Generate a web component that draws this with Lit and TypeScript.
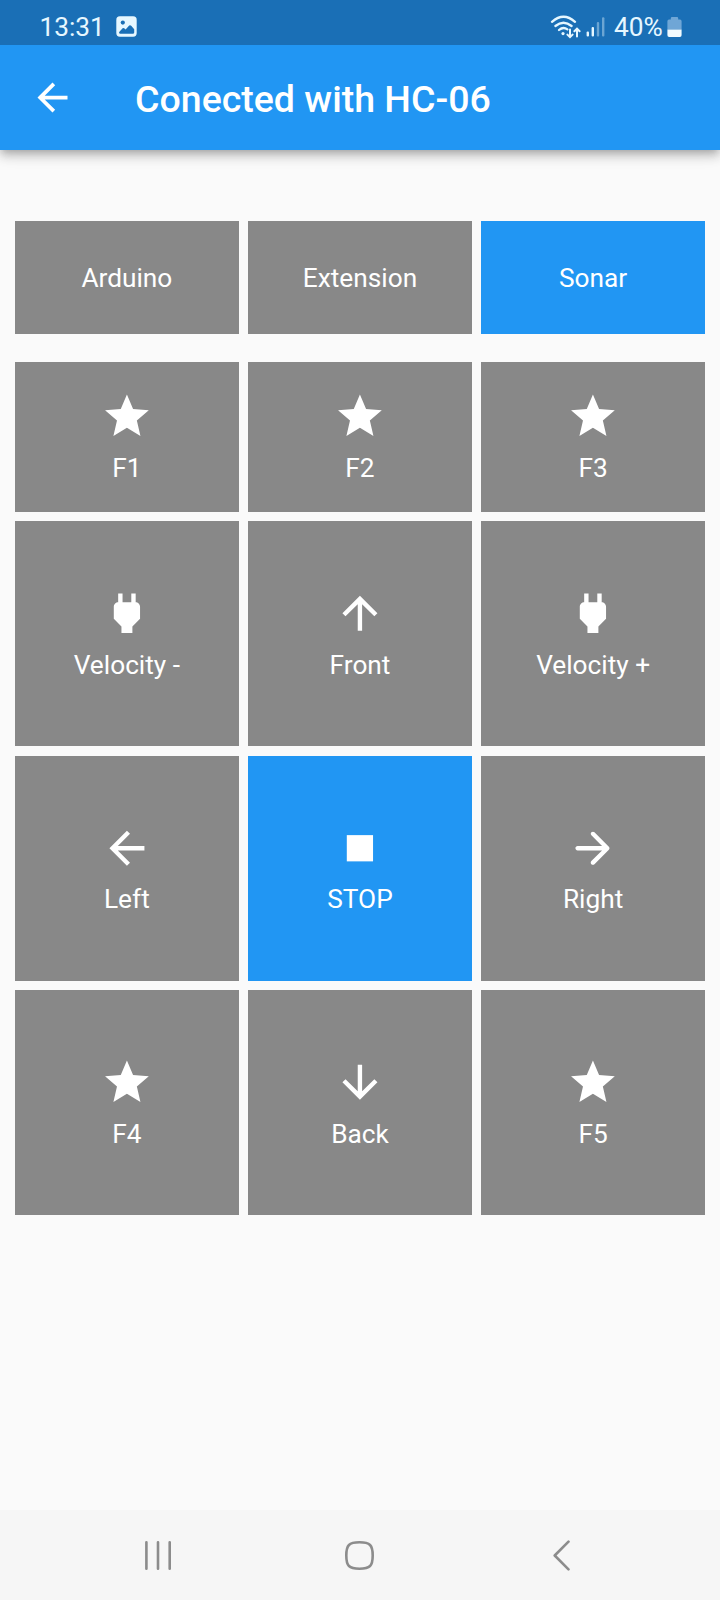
import { LitElement, html, css, svg } from "lit";
import { customElement, property } from "lit/decorators.js";
import { classMap } from "lit/directives/class-map.js";

const ICONS: Record<string, string> = {
  star: "M12 17.27L18.18 21l-1.64-7.03L22 9.24l-7.19-.61L12 2 9.19 8.63 2 9.24l5.46 4.73L5.82 21z",
  power:
    "M16.01 7L16 3h-2v4h-4V3H8v4h-.01C7 6.99 6 7.99 6 8.99v5.49L9.5 18v3h5v-3l3.5-3.51v-5.5c0-1-1-2-1.99-1.99z",
  up: "M4 12l1.41 1.41L11 7.83V20h2V7.83l5.58 5.59L20 12l-8-8-8 8z",
  down: "M20 12l-1.41-1.41L13 16.17V4h-2v12.17l-5.58-5.59L4 12l8 8 8-8z",
  left: "M20 11H7.83l5.59-5.59L12 4l-8 8 8 8 1.41-1.41L7.83 13H20v-2z",
  right:
    "M5 13h11.17l-4.88 4.88c-.39.39-.39 1.03 0 1.42.39.39 1.02.39 1.41 0l6.59-6.59c.39-.39.39-1.02 0-1.41l-6.58-6.6c-.39-.39-1.02-.39-1.41 0-.39.39-.39 1.02 0 1.41L16.17 11H5c-.55 0-1 .45-1 1s.45 1 1 1z",
  stop: "M6 6h12v12H6z",
};

@customElement("pad-button")
class PadButton extends LitElement {
  @property() label = "";
  @property() icon = "";
  @property({ type: Boolean }) active = false;

  static styles = css`
    :host {
      display: block;
    }
    .tile {
      box-sizing: border-box;
      width: 100%;
      height: 100%;
      margin: 0;
      padding: 0;
      border: 0;
      display: flex;
      flex-direction: column;
      align-items: center;
      justify-content: center;
      gap: 9.4px;
      background: #888888;
      color: #fff;
      font: 400 26.25px/30.8px Roboto, sans-serif;
    }
    .active {
      background: #2196f3;
    }
    .icon {
      display: block;
      width: 52.5px;
      height: 52.5px;
      fill: currentColor;
    }
    .label {
      display: block;
      padding-top: 0.7px;
      margin-bottom: -0.7px;
    }
  `;

  render() {
    return html`<button class=${classMap({ tile: true, active: this.active })}>
      ${this.icon
        ? html`<svg class="icon" viewBox="0.15 0 24 24">${svg`<path d=${ICONS[this.icon]} />`}</svg>`
        : ""}
      <span class="label">${this.label}</span>
    </button>`;
  }
}

interface Cell {
  label: string;
  icon?: string;
  active?: boolean;
}

const TABS: Cell[] = [{ label: "Arduino" }, { label: "Extension" }, { label: "Sonar", active: true }];

const PAD: Cell[] = [
  { label: "F1", icon: "star" },
  { label: "F2", icon: "star" },
  { label: "F3", icon: "star" },
  { label: "Velocity -", icon: "power" },
  { label: "Front", icon: "up" },
  { label: "Velocity +", icon: "power" },
  { label: "Left", icon: "left" },
  { label: "STOP", icon: "stop", active: true },
  { label: "Right", icon: "right" },
  { label: "F4", icon: "star" },
  { label: "Back", icon: "down" },
  { label: "F5", icon: "star" },
];

@customElement("app-root")
class AppRoot extends LitElement {
  static styles = css`
    :host {
      display: flex;
      flex-direction: column;
      width: 720px;
      height: 1600px;
      overflow: hidden;
      background: #fafafa;
      font-family: Roboto, sans-serif;
    }
    svg {
      display: block;
      flex: none;
    }
    .top {
      flex: none;
      background: #2196f3;
      box-shadow: 0 3.75px 7.5px -1.9px rgba(0, 0, 0, 0.2), 0 7.5px 9.4px rgba(0, 0, 0, 0.14),
        0 1.9px 18.75px rgba(0, 0, 0, 0.12);
    }
    .status {
      box-sizing: border-box;
      height: 45px;
      padding: 8px 38.3px 0 39.5px;
      display: flex;
      align-items: flex-start;
      justify-content: space-between;
      background: #1a6fb6;
      color: #e6f7ff;
      font-size: 26.25px;
      line-height: 38px;
    }
    .group {
      display: flex;
      align-items: center;
      height: 38px;
    }
    .picture {
      margin: -1px 0 0 11px;
    }
    .wifi {
      margin-right: 5px;
    }
    .signal {
      margin-right: 9px;
    }
    .battery {
      margin: -1px 0 0 4px;
    }
    .bar {
      display: flex;
      align-items: center;
      height: 105px;
      padding-left: 30px;
      gap: 60px;
      color: #fff;
    }
    .title {
      margin: 0;
      padding-top: 2px;
      font-size: 37.5px;
      font-weight: 500;
      line-height: 44px;
    }
    .body {
      flex: 1;
      padding: 71.15px 15px 0;
    }
    .grid {
      display: grid;
      grid-template-columns: repeat(3, 1fr);
      gap: 9.375px;
    }
    .tabs {
      grid-auto-rows: 112.5px;
      margin-bottom: 28.2px;
    }
    .pad {
      grid-template-rows: 150px 225px 225px 225px;
    }
    .nav {
      flex: none;
      box-sizing: border-box;
      height: 90px;
      padding: 0 57px;
      display: grid;
      grid-template-columns: repeat(3, 201px);
      place-items: center;
      background: #f6f6f6;
    }
    .stroke {
      fill: none;
      stroke: #8c8c8c;
      stroke-width: 2.6;
      stroke-linecap: round;
      stroke-linejoin: round;
    }
  `;

  private cells(items: Cell[]) {
    return items.map(
      (c) =>
        html`<pad-button .label=${c.label} .icon=${c.icon ?? ""} .active=${c.active ?? false}></pad-button>`
    );
  }

  render() {
    return html`
      <header class="top">
        <div class="status">
          <div class="group">
            <span>13:31</span>
            <svg class="picture" width="21" height="21" viewBox="0 0 21 21">
              <rect x="0.3" y="0.3" width="20.4" height="20.4" rx="3.6" fill="#e6f7ff" />
              <circle cx="6.8" cy="6.6" r="2.1" fill="#1a6fb6" />
              <path
                d="M3 16.2 L6.6 12.2 Q7.4 11.6 8.2 12.3 L9.6 13.4 L13.2 9.5 Q14.2 8.7 15.2 9.7 L18.2 13.2 V16.4 Q18.2 17.8 16.8 17.8 H4.4 Q3 17.8 3 16.2z"
                fill="#1a6fb6"
              />
            </svg>
          </div>
          <div class="group">
            <svg class="wifi" width="31" height="24" viewBox="0 0 31 24" fill="none" stroke="#e6f7ff" stroke-linecap="round">
              <path d="M2 6.8 Q13.5 -3.2 25 6.8" stroke-width="2.3" />
              <path d="M5.4 11 Q13.5 4.4 21.6 11" stroke-width="2.3" />
              <path d="M9 15 Q13.2 11.4 17.4 14.4" stroke-width="2.3" />
              <circle cx="13" cy="18.6" r="1.6" fill="#e6f7ff" stroke="none" />
              <path d="M20 14.5 V22 M17.4 19.6 L20 22.2 L22.6 19.6 M27 21.4 V13.8 M24.4 16.2 L27 13.6 L29.6 16.2" stroke-width="2" />
            </svg>
            <svg class="signal" width="19" height="20" viewBox="0 0 19 20" fill="#e6f7ff">
              <rect x="0.6" y="14.6" width="2.4" height="4.8" rx="1" />
              <rect x="5.6" y="10" width="2.4" height="9.4" rx="1" />
              <rect x="10.8" y="5" width="2.4" height="14.4" rx="1" opacity="0.4" />
              <rect x="16" y="0.3" width="2.4" height="19.1" rx="1" opacity="0.4" />
            </svg>
            <span>40%</span>
            <svg class="battery" width="15" height="20" viewBox="0 0 15 20">
              <path d="M2 2.6 H3.8 V1.2 Q3.8 0 5 0 H10 Q11.2 0 11.2 1.2 V2.6 H13 Q14.6 2.6 14.6 4.2 V12.4 H0.4 V4.2 Q0.4 2.6 2 2.6z" fill="#6fa6d6" />
              <path d="M0.4 12.4 H14.6 V18 Q14.6 20 12.8 20 H2.2 Q0.4 20 0.4 18z" fill="#f2fbff" />
            </svg>
          </div>
        </div>
        <div class="bar">
          <svg width="45" height="45" viewBox="0 0 24 24" fill="#fff"><path d=${ICONS.left} /></svg>
          <h1 class="title">Conected with HC-06</h1>
        </div>
      </header>
      <main class="body">
        <div class="grid tabs">${this.cells(TABS)}</div>
        <div class="grid pad">${this.cells(PAD)}</div>
      </main>
      <nav class="nav">
        <svg class="stroke" width="30" height="32" viewBox="0 0 30 32">
          <path d="M3.4 3.2 V29.8 M15 3.2 V29.8 M26.7 3.2 V29.8" />
        </svg>
        <svg class="stroke" width="32" height="32" viewBox="-0.5 0 32 32">
          <path
            d="M16 3.3 C26.5 3.3 29.2 6 29.2 16.5 C29.2 27 26.5 29.7 16 29.7 C5.5 29.7 2.8 27 2.8 16.5 C2.8 6 5.5 3.3 16 3.3z"
          />
        </svg>
        <svg class="stroke" width="30" height="32" viewBox="0 0 30 32">
          <path d="M23.5 2.7 L9.7 16.5 L23.5 30.3" />
        </svg>
      </nav>
    `;
  }
}
